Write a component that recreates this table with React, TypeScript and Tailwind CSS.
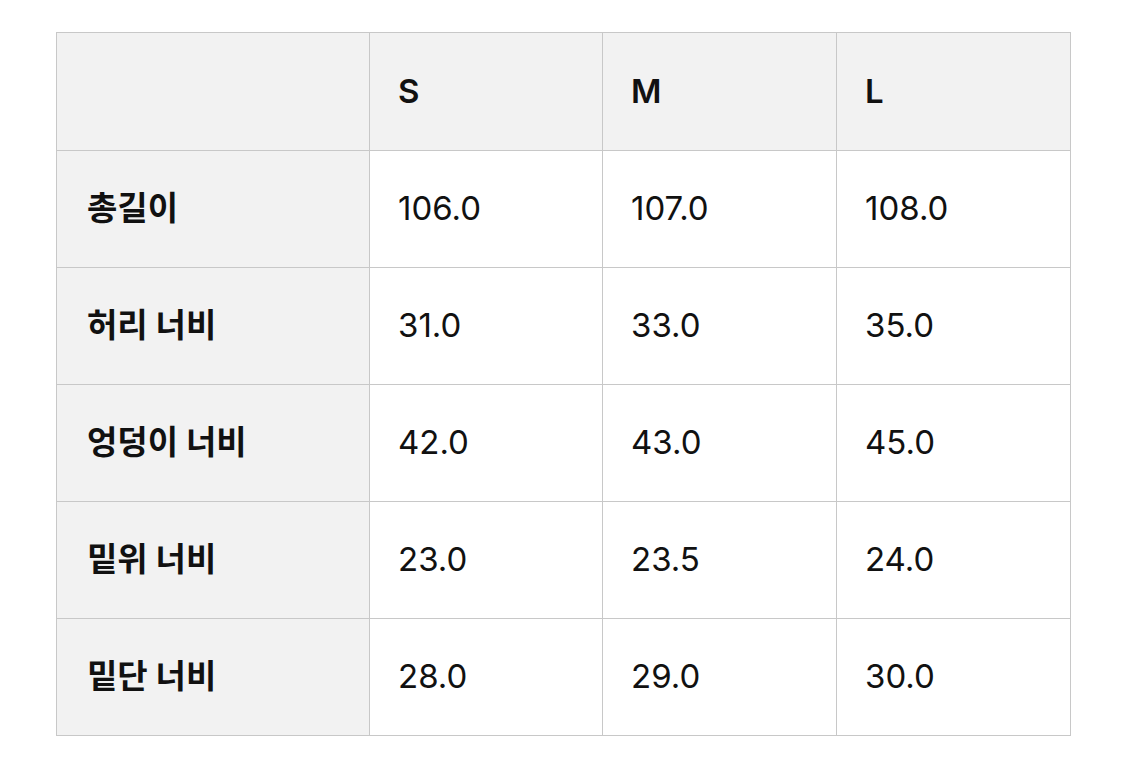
const sizes = ["S", "M", "L"];

const rows = [
  { label: "총길이", values: ["106.0", "107.0", "108.0"] },
  { label: "허리 너비", values: ["31.0", "33.0", "35.0"] },
  { label: "엉덩이 너비", values: ["42.0", "43.0", "45.0"] },
  { label: "밑위 너비", values: ["23.0", "23.5", "24.0"] },
  { label: "밑단 너비", values: ["28.0", "29.0", "30.0"] },
];

export default function App() {
  return (
    <div
      className="min-h-screen bg-white pt-[32px] pl-[56px] text-[#111]"
      style={{ fontFamily: 'Inter, "Noto Sans CJK KR", sans-serif' }}
    >
      <table className="w-[1014px] table-fixed border-collapse border border-[#d0d0d0] text-[33px]">
        <colgroup>
          <col className="w-[313px]" />
          <col className="w-[233px]" />
          <col className="w-[234px]" />
          <col className="w-[234px]" />
        </colgroup>
        <thead>
          <tr className="h-[118px] bg-[#f2f2f2]">
            <th className="border border-[#c8c8c8]" />
            {sizes.map((s) => (
              <th key={s} className="border border-[#c8c8c8] pl-[28px] text-left font-semibold">
                {s}
              </th>
            ))}
          </tr>
        </thead>
        <tbody>
          {rows.map((row) => (
            <tr key={row.label} className="h-[117px]">
              <th className="border border-[#c8c8c8] bg-[#f2f2f2] pl-[30px] text-left font-bold">
                {row.label}
              </th>
              {row.values.map((v, i) => (
                <td key={i} className="border border-[#c8c8c8] pl-[28px] font-normal">
                  {v}
                </td>
              ))}
            </tr>
          ))}
        </tbody>
      </table>
    </div>
  );
}
